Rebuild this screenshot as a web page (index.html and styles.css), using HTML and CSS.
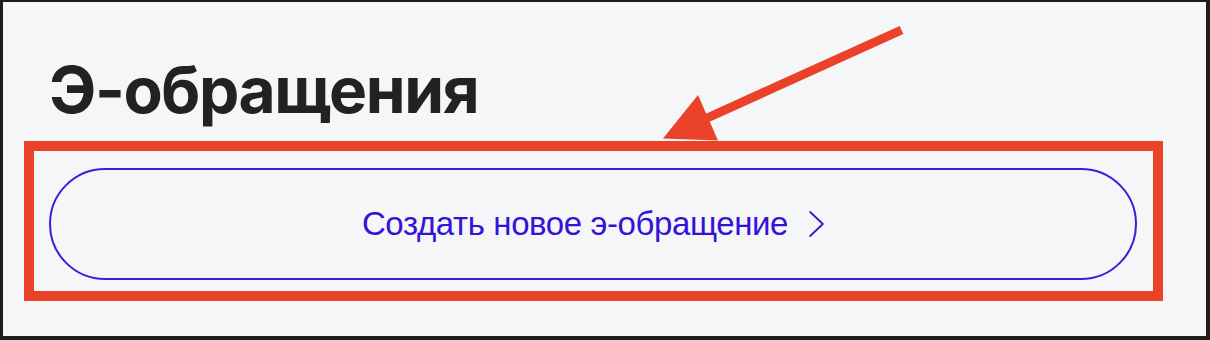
FILE: index.html
```html
<!DOCTYPE html>
<html lang="ru">
<head>
<meta charset="utf-8">
<title>Э-обращения</title>
<link rel="stylesheet" href="styles.css">
</head>
<body>
<div class="shot">
  <main class="frame">
    <h1 class="title">Э-обращения</h1>
    <a class="create-btn" href="#">
      <span class="create-label">Создать новое э-обращение</span>
      <svg class="chevron" width="15" height="26" viewBox="0 0 15 26" aria-hidden="true">
        <polyline points="1.2,1 13.8,13 1.2,25" fill="none" stroke="currentColor" stroke-width="1.8" stroke-linecap="round" stroke-linejoin="round"/>
      </svg>
    </a>
  </main>
  <div class="highlight-box"></div>
  <svg class="pointer" width="1210" height="340" viewBox="0 0 1210 340" aria-hidden="true">
    <line x1="901.5" y1="30" x2="705" y2="119" stroke="#ea4129" stroke-width="9"/>
    <polygon points="663,138.5 698,95 718,140.5" fill="#ea4129"/>
  </svg>
</div>
</body>
</html>
```

FILE: styles.css
```css
html, body {
  margin: 0;
  padding: 0;
  background: #f5f6f8;
}

.shot {
  position: relative;
  width: 1210px;
  height: 340px;
  overflow: hidden;
}

.frame {
  box-sizing: border-box;
  width: 1210px;
  height: 340px;
  border-style: solid;
  border-color: #1d1d1d;
  border-width: 2px 4px 4px 3px;
  background: #f5f6f8;
  padding: 56px 69px 0 46px;
  display: flex;
  flex-direction: column;
  align-items: stretch;
}

.title {
  margin: 0;
  font-family: Inter, "Liberation Sans", sans-serif;
  font-weight: 700;
  font-size: 64px;
  line-height: 64px;
  height: 64px;
  color: #222222;
  letter-spacing: -1.4px;
}

.create-btn {
  box-sizing: border-box;
  margin-top: 46px;
  height: 112px;
  border: 2px solid #3a1ed8;
  border-radius: 56px;
  display: flex;
  align-items: center;
  justify-content: center;
  gap: 21px;
  color: #3413d6;
  text-decoration: none;
}

.create-label {
  font-family: "Liberation Sans", Arial, sans-serif;
  font-weight: 400;
  font-size: 33px;
  line-height: 40px;
  letter-spacing: -0.4px;
}

.chevron {
  display: block;
  flex: none;
}

.highlight-box {
  position: absolute;
  left: 24px;
  top: 141px;
  width: 1139px;
  height: 160px;
  box-sizing: border-box;
  border: 10px solid #ea4129;
}

.pointer {
  position: absolute;
  left: 0;
  top: 0;
}
```
